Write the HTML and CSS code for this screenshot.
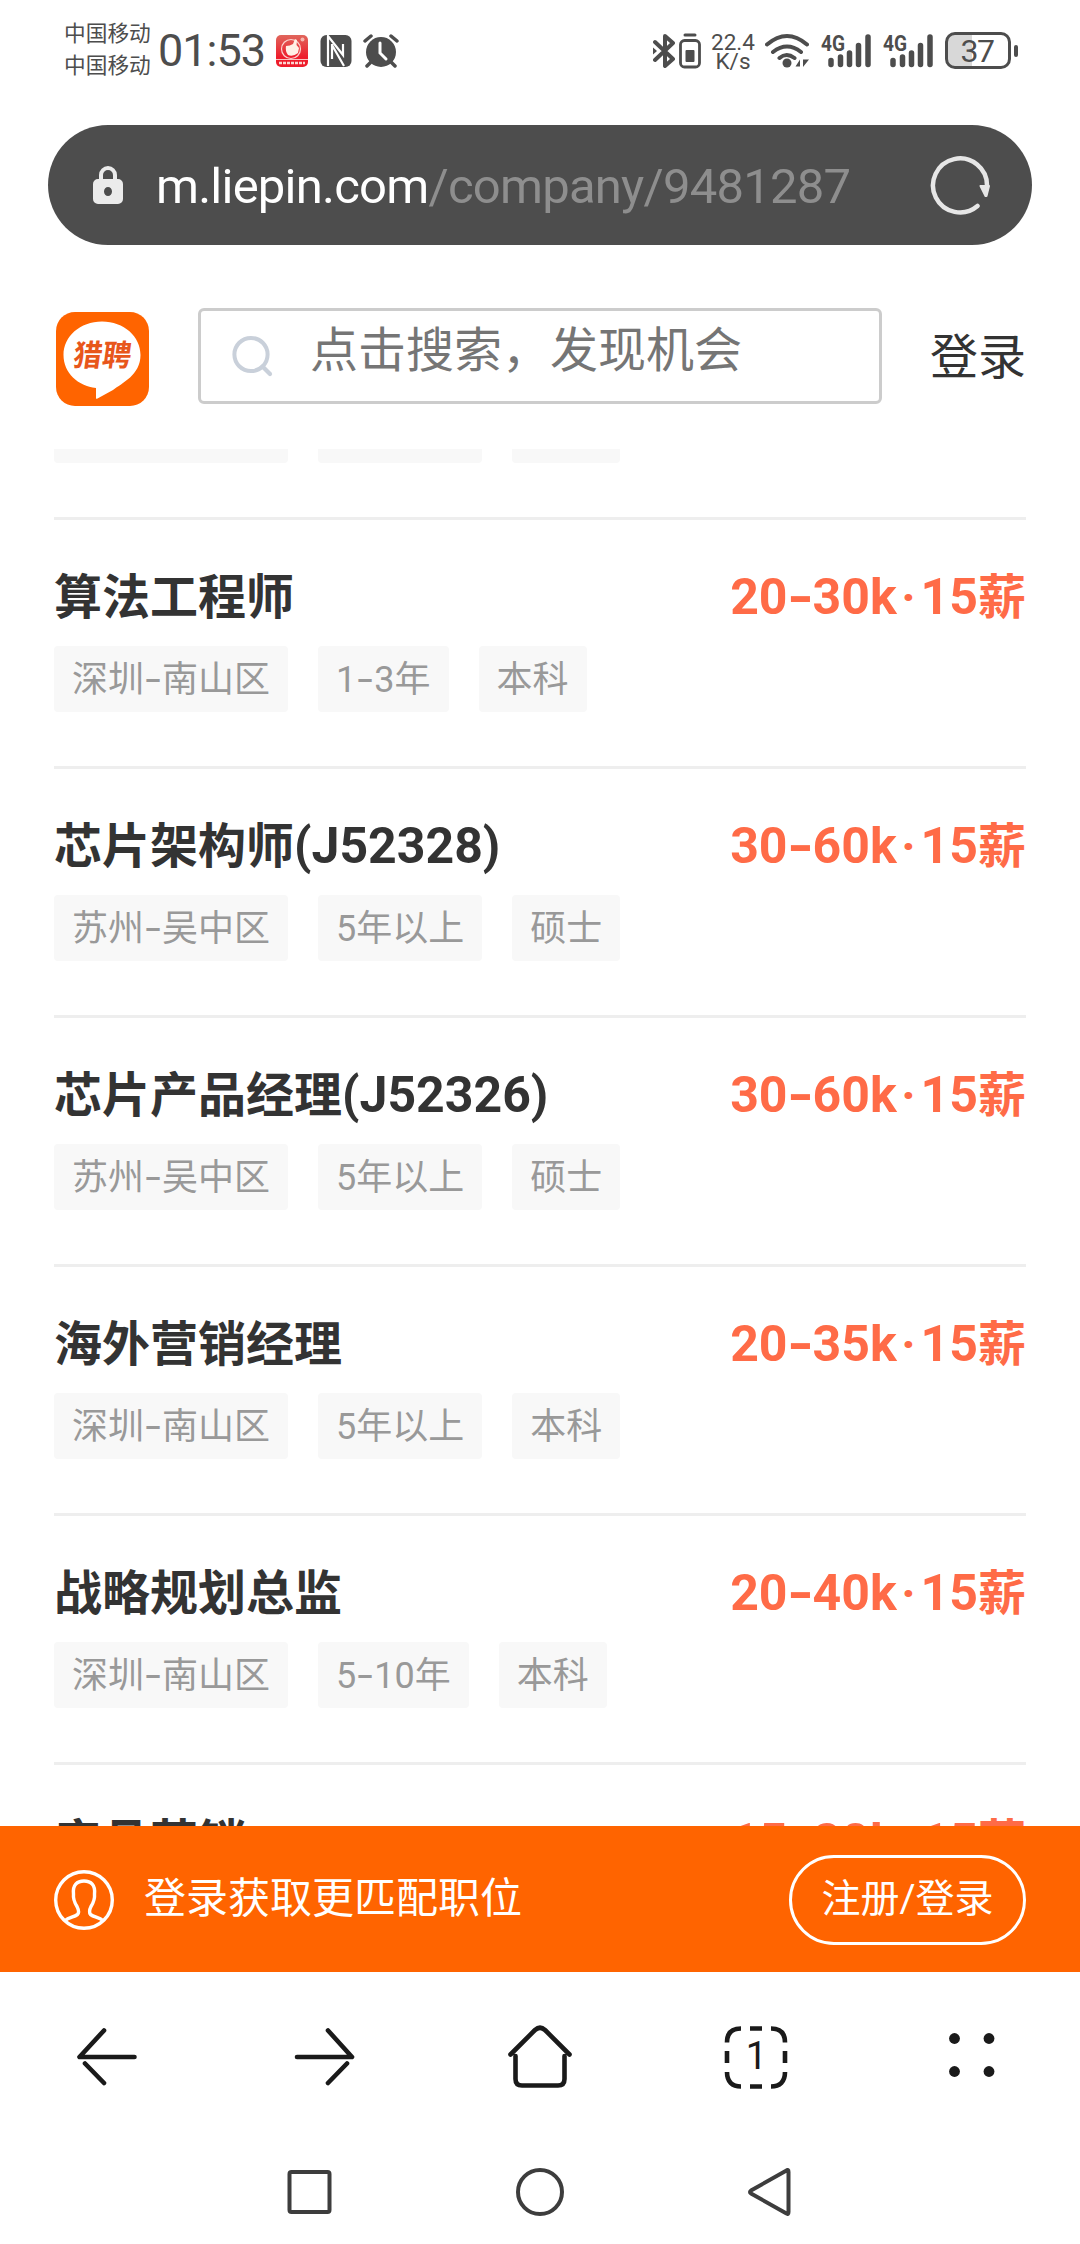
FILE: index.html
```html
<!DOCTYPE html>
<html lang="zh-CN">
<head>
<meta charset="utf-8">
<title>猎聘</title>
<link rel="stylesheet" href="styles.css">
</head>
<body>
<div class="phone">
  <div class="status">
    <div class="carriers"><span>中国移动</span><span>中国移动</span></div>
    <div class="clock">01:53</div>
    <svg class="app-icon" width="32" height="32" viewBox="0 0 32 32">
      <defs><linearGradient id="red" x1="0" y1="0" x2="0" y2="1"><stop offset="0" stop-color="#e0665c"/><stop offset=".7" stop-color="#ee1c2b"/></linearGradient></defs>
      <rect width="32" height="32" rx="5" fill="url(#red)"/>
      <circle cx="15" cy="14" r="9.500" fill="none" stroke="#fbd5d0" stroke-width="1.200"/>
      <path d="M10 11q4 0 7-2l2-5 2 1-.5 5 2.500 3-1 5q-5 4-10 2-3-4-2-9z" fill="#fff0e6"/>
      <circle cx="26.500" cy="4.500" r="2" fill="#f6b6ae"/>
      <path d="M0 24.500h32" stroke="#f9c4c0"/><path d="M3 28h26" stroke="#fbd5d0" stroke-width="2.500" stroke-dasharray="3 1"/>
    </svg>
    <svg class="nfc" width="32" height="32" viewBox="0 0 32 32">
      <rect x=".5" width="31" height="32" rx="6" fill="#4d4d4d"/>
      <path d="M8 31V1l15 19V9M12 9v15M12 10l12 21" fill="none" stroke="#fff" stroke-width="2.200"/>
    </svg>
    <svg class="alarm" width="36" height="34" viewBox="0 0 36 34">
      <circle cx="18" cy="18" r="15" fill="#4d4d4d"/>
      <path d="M2 7l6-5M34 7l-6-5M8 28l-4 4M28 28l4 4" stroke="#4d4d4d" stroke-width="3.500" stroke-linecap="round"/>
      <path d="M17 9v10l6 6" fill="none" stroke="#fff" stroke-width="3" stroke-linecap="round"/>
    </svg>
    <svg class="bt" width="22" height="34" viewBox="0 0 22 34">
      <path d="M2 8l18 17-8 7V2l8 7L2 26" fill="none" stroke="#4d4d4d" stroke-width="4" stroke-linejoin="round" stroke-linecap="round"/>
      <path d="M0 13.500l4 3.500-4 3.500z" fill="#4d4d4d"/>
    </svg>
    <svg class="device" width="22" height="36" viewBox="0 0 22 36">
      <rect x="1.500" y="7.500" width="19" height="26.500" rx="4" fill="none" stroke="#4d4d4d" stroke-width="2.800"/>
      <path d="M6 2h10" stroke="#4d4d4d" stroke-width="3" stroke-linecap="round"/>
      <rect x="6.500" y="17" width="9" height="12" rx="1" fill="#4d4d4d"/>
    </svg>
    <div class="speed"><span>22.4</span><span>K/s</span></div>
    <svg class="wifi" width="44" height="36" viewBox="0 0 44 36">
      <g fill="none" stroke="#4d4d4d" stroke-width="4" stroke-linecap="round"><path d="M2 11.500q20-17 40 0M8 19q14-11 28 0M14.500 25q7-6 15 0"/></g>
      <circle cx="22" cy="30" r="4.500" fill="#4d4d4d"/>
      <path d="M35 26.500v7h-4.500zM38 26.500h6L38 34z" fill="#4d4d4d"/>
    </svg>
    <svg class="signal" width="50" height="44" viewBox="0 -4 50 44">
      <g stroke="#4d4d4d" stroke-width="5.500" stroke-linecap="round"><path d="M10 27.500v4M19.500 24v7.500M28.500 20v11.500M37.500 12.500v19M47 4v27.500"/></g>
      <text class="net" x="0" y="17.500" textLength="24" lengthAdjust="spacingAndGlyphs">4G</text>
    </svg>
    <svg class="signal" width="50" height="44" viewBox="0 -4 50 44">
      <g stroke="#4d4d4d" stroke-width="5.500" stroke-linecap="round"><path d="M10 27.500v4M19.500 24v7.500M28.500 20v11.500M37.500 12.500v19M47 4v27.500"/></g>
      <text class="net" x="0" y="17.500" textLength="24" lengthAdjust="spacingAndGlyphs">4G</text>
    </svg>
    <div class="battery"><div class="cell">37</div><i class="nub"></i></div>
  </div>

  <div class="address">
    <svg class="lock" width="30" height="40" viewBox="0 0 30 40">
      <path d="M8 16V10a7 7 0 0 1 14 0v6" fill="none" stroke="#ebebeb" stroke-width="4"/>
      <path fill-rule="evenodd" d="M5 14h20a5 5 0 0 1 5 5v15a5 5 0 0 1-5 5H5a5 5 0 0 1-5-5V19a5 5 0 0 1 5-5zM15 22a4 4.500 0 0 0 0 9 4 4.500 0 0 0 0-9z" fill="#ebebeb"/>
    </svg>
    <div class="url"><span class="host">m.liepin.com</span><span class="path">/company/9481287</span></div>
    <svg class="reload" width="60" height="60" viewBox="0 0 60 60">
      <path d="M47.500 51a27 27 0 1 1 9.500-20" fill="none" stroke="#e6e6e6" stroke-width="4.500" stroke-linecap="round"/>
      <path d="M50.500 31h8.500l-2.500 10h-1z" fill="#e6e6e6" stroke="#e6e6e6" stroke-width="2" stroke-linejoin="round"/>
    </svg>
  </div>

  <header class="head">
    <svg class="logo" width="96" height="96" viewBox="0 0 96 96">
      <rect x="2" y="2" width="93" height="94" rx="19" fill="#ff6400"/>
      <path d="M48 11.500c22 0 38.500 15 38.500 33.500C86.500 65 68 73 59 80L43.500 88.500q-2 1-1.500-1V78C24 76 9.500 63 9.500 45 9.500 26.500 26 11.500 48 11.500z" fill="#fff"/>
      <text class="logo-text" x="18" y="56" textLength="58" lengthAdjust="spacingAndGlyphs" transform="translate(8 0) skewX(-8)">猎聘</text>
    </svg>
    <div class="search">
      <svg width="42" height="42" viewBox="0 0 42 42"><circle cx="19" cy="19.500" r="16.600" fill="none" stroke="#c9d0da" stroke-width="4"/><path d="M30.500 31.500l7.500 7.500" stroke="#c9d0da" stroke-width="4.200" stroke-linecap="round"/></svg>
      <span class="placeholder">点击搜索，发现机会</span>
    </div>
    <a class="login">登录</a>
  </header>

  <main class="list-window">
    <ul class="jobs">
      <li class="job">
        <div class="line"></div>
        <div class="tags"><span class="tag wide"></span><span class="tag mid"></span><span class="tag short"></span></div>
      </li>
      <li class="job">
        <div class="line"><h3>算法工程师</h3><b class="pay"><em>20<i>-</i>30k</em><u>·</u><em>15</em>薪</b></div>
        <div class="tags"><span class="tag">深圳<i>-</i>南山区</span><span class="tag">1<i>-</i>3年</span><span class="tag">本科</span></div>
      </li>
      <li class="job">
        <div class="line"><h3>芯片架构师<em>(J52328)</em></h3><b class="pay"><em>30<i>-</i>60k</em><u>·</u><em>15</em>薪</b></div>
        <div class="tags"><span class="tag">苏州<i>-</i>吴中区</span><span class="tag">5年以上</span><span class="tag">硕士</span></div>
      </li>
      <li class="job">
        <div class="line"><h3>芯片产品经理<em>(J52326)</em></h3><b class="pay"><em>30<i>-</i>60k</em><u>·</u><em>15</em>薪</b></div>
        <div class="tags"><span class="tag">苏州<i>-</i>吴中区</span><span class="tag">5年以上</span><span class="tag">硕士</span></div>
      </li>
      <li class="job">
        <div class="line"><h3>海外营销经理</h3><b class="pay"><em>20<i>-</i>35k</em><u>·</u><em>15</em>薪</b></div>
        <div class="tags"><span class="tag">深圳<i>-</i>南山区</span><span class="tag">5年以上</span><span class="tag">本科</span></div>
      </li>
      <li class="job">
        <div class="line"><h3>战略规划总监</h3><b class="pay"><em>20<i>-</i>40k</em><u>·</u><em>15</em>薪</b></div>
        <div class="tags"><span class="tag">深圳<i>-</i>南山区</span><span class="tag">5<i>-</i>10年</span><span class="tag">本科</span></div>
      </li>
      <li class="job">
        <div class="line"><h3>产品营销</h3><b class="pay"><em>15<i>-</i>20k</em><u>·</u><em>15</em>薪</b></div>
      </li>
    </ul>
  </main>

  <div class="banner">
    <svg width="60" height="60" viewBox="0 0 60 60" fill="none" stroke="#fff" stroke-width="3.400">
      <circle cx="30" cy="30" r="28.300"/>
      <path d="M11 50.500c4-3 9-3.500 12.500-6 2-2 1-5-.5-8-2.500-4-4-8-3.500-12.500C18.500 15 23 11 30 11s11.500 4 10.500 13c.5 4.500-1 8.500-3.500 12.500-1.500 3-2 6-.5 8 3.500 2.500 8.500 3 12.500 6"/>
    </svg>
    <span class="banner-text">登录获取更匹配职位</span>
    <a class="join">注册/登录</a>
  </div>

  <nav class="tools">
    <span><svg width="64" height="64" viewBox="0 0 64 64"><path d="M28 5.500L3.500 32H58.500M9 38.500L28 58"/></svg></span>
    <span><svg width="64" height="64" viewBox="0 0 64 64"><path d="M36 5.500L60 32H5M55 38.500L36 58"/></svg></span>
    <span><svg width="66" height="66" viewBox="0 0 66 66"><path d="M3.500 30.500L28 6q5-4.500 10 0l24.500 24.500M8.500 32v23q0 6.500 6.500 6.500h36q6.500 0 6.500-6.500V32"/></svg></span>
    <span><svg width="64" height="64" viewBox="0 0 64 64"><path class="butt" d="M3 17.500C3 8 8 3.500 17 3.500M47 3.500c9 0 14 4.500 14 14M61 47c0 9.500-5 14.500-14 14.500M17 61.500C8 61.500 3 56.500 3 47M26 3.500h12M26 61.500h12M3 26v12M61 26v12"/><text x="32.500" y="43.500" text-anchor="middle">1</text></svg></span>
    <span><svg width="64" height="64" viewBox="0 0 64 64"><g class="dots"><circle cx="14.500" cy="13.500" r="5.400"/><circle cx="49" cy="13.500" r="5.400"/><circle cx="14.500" cy="46.500" r="5.400"/><circle cx="49" cy="46.500" r="5.400"/></g></svg></span>
  </nav>
  <nav class="system">
    <svg width="48" height="48" viewBox="0 0 48 48"><rect x="4.500" y="4" width="40" height="40" rx="2"/></svg>
    <svg width="48" height="48" viewBox="0 0 48 48"><circle cx="24" cy="24" r="22"/></svg>
    <svg width="48" height="48" viewBox="0 0 48 48"><path d="M39.500 2.500Q41.500 1 41.500 4v40q0 3-2 1.500L4 25.500q-2-1.500 0-3z"/></svg>
  </nav>
</div>
</body>
</html>
```
FILE: styles.css
```css
* { box-sizing: border-box; }
body { margin: 0; background: #fff; color: #333; font-family: Roboto, "Noto Sans CJK SC", sans-serif; }
svg { display: block; flex: none; }
.phone { width: 1080px; height: 2244px; display: flex; flex-direction: column; overflow: hidden; background: #fff; }

.status { height: 125px; flex: none; display: flex; align-items: center; padding: 0 62px 24px 64px; color: #4d4d4d; }
.carriers { display: flex; flex-direction: column; font-size: 21.7px; line-height: 32.500px; width: 87px; margin-bottom: 1px; white-space: nowrap; }
.clock { width: 112px; padding-left: 7px; font-size: 45px; line-height: 60px; letter-spacing: -1px; white-space: nowrap; }
.app-icon { margin-left: 13px; }
.nfc { margin-left: 12px; }
.alarm { margin-left: 11px; }
.bt { margin-left: auto; }
.device { margin-left: 4px; }
.speed { display: flex; flex-direction: column; align-items: center; width: 44px; margin: 2px 0 0 10px; font-size: 22.500px; line-height: 19px; }
.wifi { margin-left: 10px; }
.signal { margin-left: 12px; }
.net { font: 700 22px Roboto, sans-serif; fill: #4d4d4d; }
.battery { display: flex; align-items: center; gap: 3px; margin-left: 12px; }
.cell { width: 66px; height: 37px; border: 3px solid #4d4d4d; border-radius: 10px; background: linear-gradient(90deg, #d8d8d8 40%, #fff 40%); font-size: 32px; line-height: 32px; text-align: center; letter-spacing: -1.500px; padding-right: 2px; }
.nub { width: 4px; height: 12px; border-radius: 2px; background: #4d4d4d; }

.address { flex: none; height: 120px; margin: 0 48px; padding: 0 42px 0 45px; border-radius: 60px; background: #4d4d4d; display: flex; align-items: center; }
.url { margin-left: 33px; padding-top: 3px; font-size: 49px; line-height: 60px; letter-spacing: -0.770px; white-space: nowrap; }
.host { color: #fff; }
.path { color: #8e8e8e; }
.reload { margin-left: auto; }

.head { flex: none; height: 204px; padding: 63px 54px 45px; display: flex; align-items: center; }
.logo { margin-top: 4px; }
.logo-text { font: 700 30px "Noto Sans CJK SC", sans-serif; fill: #e8561b; }
.search { width: 684px; height: 96px; margin-left: 48px; padding-left: 31px; border: 3px solid #ccc; border-radius: 6px; display: flex; align-items: center; }
.placeholder { margin-left: 36px; padding-bottom: 10px; font-size: 48px; line-height: 72px; color: #757575; white-space: nowrap; }
.login { margin-left: auto; padding-top: 4px; font-size: 48px; line-height: 72px; white-space: nowrap; }

.list-window { flex: none; height: 1377px; overflow: hidden; padding: 0 54px; }
.jobs { margin: -178px 0 0; padding: 0; list-style: none; }
.job { height: 249px; padding-top: 42px; border-bottom: 3px solid #eee; }
.line { height: 72px; display: flex; justify-content: space-between; align-items: center; white-space: nowrap; }
.line h3 { margin: 0; font-size: 48px; line-height: 72px; font-weight: 700; }
.pay { font-size: 48px; line-height: 72px; color: #ff6b47; }
.line em { font-style: normal; font-size: 50px; line-height: 1; }
.pay u { display: inline-block; width: 24px; text-align: center; text-decoration: none; }
.line i, .tag i { display: inline-block; width: .5em; font-family: Inter, sans-serif; font-style: normal; text-align: center; line-height: 1; transform: scaleX(1.150); }
.tags { display: flex; gap: 30px; margin-top: 12px; }
.tag { height: 66px; padding: 1px 18px 0; border-radius: 4px; background: #f8f8f8; color: #999; font-size: 36px; line-height: 66px; white-space: nowrap; }
.wide { width: 234px; }
.mid { width: 164px; }
.short { width: 108px; }

.banner { flex: none; height: 146px; padding: 0 54px; background: #ff6400; color: #fff; display: flex; align-items: center; }
.banner svg { margin-top: 2px; }
.banner-text { margin-left: 30px; font-size: 42px; line-height: 60px; white-space: nowrap; }
.join { margin: 2px 0 0 auto; width: 237px; height: 90px; border: 3px solid #fff; border-radius: 45px; font-size: 39px; line-height: 83px; text-align: center; white-space: nowrap; }

.tools { flex: none; height: 170px; display: grid; grid-template-columns: repeat(5, 1fr); align-items: center; justify-items: center; }
.tools svg { fill: none; stroke: #1a1a1a; stroke-width: 4.600; stroke-linecap: round; stroke-linejoin: round; }
.tools .butt { stroke-linecap: butt; }
.tools text { font: 38px Roboto, sans-serif; fill: #1a1a1a; stroke: none; }
.tools .dots { fill: #1a1a1a; stroke: none; }
.system { flex: none; height: 102px; padding: 0 285px 2px; display: flex; align-items: center; justify-content: space-between; }
.system svg { fill: none; stroke: #3d3d3d; stroke-width: 4; stroke-linejoin: round; }
```
